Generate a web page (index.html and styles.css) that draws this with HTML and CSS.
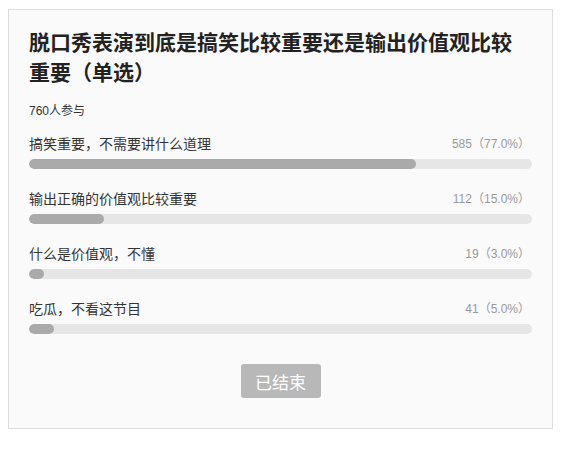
FILE: index.html
```html
<!DOCTYPE html>
<html lang="zh-CN">
<head>
    <meta charset="UTF-8">
    <meta name="viewport" content="width=device-width, initial-scale=1.0">
    <title>投票</title>
    <link rel="stylesheet" href="styles.css">
</head>
<body>
    <div class="poll">
        <h1 class="poll-title">脱口秀表演到底是搞笑比较重要还是输出价值观比较重要（单选）</h1>
        <div class="poll-meta">760人参与</div>

        <ul class="options">
            <li class="option">
                <div class="option-head">
                    <span class="option-label">搞笑重要，不需要讲什么道理</span>
                    <span class="option-count">585（77.0%）</span>
                </div>
                <div class="bar"><div class="bar-fill" style="width: 77%"></div></div>
            </li>
            <li class="option">
                <div class="option-head">
                    <span class="option-label">输出正确的价值观比较重要</span>
                    <span class="option-count">112（15.0%）</span>
                </div>
                <div class="bar"><div class="bar-fill" style="width: 15%"></div></div>
            </li>
            <li class="option">
                <div class="option-head">
                    <span class="option-label">什么是价值观，不懂</span>
                    <span class="option-count">19（3.0%）</span>
                </div>
                <div class="bar"><div class="bar-fill" style="width: 3%"></div></div>
            </li>
            <li class="option">
                <div class="option-head">
                    <span class="option-label">吃瓜，不看这节目</span>
                    <span class="option-count">41（5.0%）</span>
                </div>
                <div class="bar"><div class="bar-fill" style="width: 5%"></div></div>
            </li>
        </ul>

        <div class="poll-footer">
            <button class="poll-btn" disabled>已结束</button>
        </div>
    </div>
</body>
</html>
```

FILE: styles.css
```css
body {
    margin: 9px 8px;
    background-color: #ffffff;
    font-family: 'Liberation Sans', 'Noto Sans CJK SC', sans-serif;
    color: #333333;
}

.poll {
    box-sizing: border-box;
    width: 545px;
    height: 420px;
    padding: 18px 20px 0;
    background-color: #fafafa;
    border: 1px solid #dddddd;
}

.poll-title {
    margin: 0;
    font-size: 21px;
    font-weight: bold;
    line-height: 30px;
    color: #222222;
}

.poll-meta {
    margin-top: 14px;
    font-size: 12px;
    line-height: 18px;
    color: #333333;
}

.options {
    list-style: none;
    margin: 0;
    padding: 0;
}

.option {
    margin-top: 20px;
}

.option:first-child {
    margin-top: 14px;
}

.option-head {
    display: flex;
    justify-content: space-between;
    align-items: center;
    height: 20px;
}

.option-label {
    font-size: 14px;
    line-height: 20px;
    color: #333333;
}

.option-count {
    padding-right: 2px;
    font-size: 12px;
    line-height: 20px;
    color: #999999;
}

.bar {
    margin-top: 5px;
    height: 10px;
    border-radius: 5px;
    background-color: #e6e6e6;
    overflow: hidden;
}

.bar-fill {
    height: 100%;
    border-radius: 5px;
    background-color: #aaaaaa;
}

.poll-footer {
    display: flex;
    justify-content: center;
    margin-top: 30px;
}

.poll-btn {
    width: 80px;
    height: 34px;
    padding: 0;
    border: none;
    border-radius: 3px;
    background-color: #b8b8b8;
    color: #ffffff;
    font-family: 'Noto Sans CJK SC', sans-serif;
    font-size: 17px;
}
```
